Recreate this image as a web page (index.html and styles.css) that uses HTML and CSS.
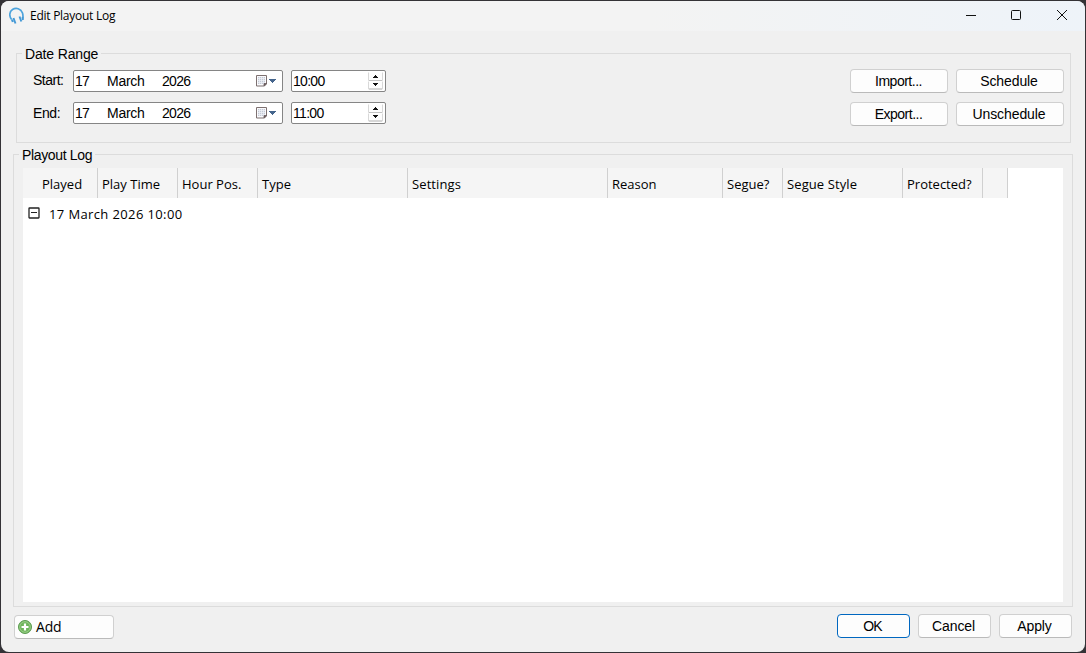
FILE: index.html
```html
<!DOCTYPE html>
<html lang="en">
    <head>
        <meta charset="utf-8">
        <title>Edit Playout Log</title>
        <link rel="stylesheet" href="styles.css">
    </head>
    <body>
        <svg class="defs" width="0" height="0">
            <symbol id="calendar" viewBox="0 0 22 14">
                <path d="M1.500 1.500h10v8.500l-2 2h-8z" fill="#fafafc" stroke="#7d7070"/>
                <path d="M3 3h7v7h-7z" fill="#c3c9d5"/>
                <path d="M3 4.500h7M3 6.500h7M3 8.500h7M4.500 3v7M6.500 3v7M8.500 3v7" stroke="#eef0f5" stroke-width=".8"/>
                <path d="M9 12v-2.500h2.500z" fill="#6b5e60" stroke="#6b5e60" stroke-width=".8"/>
                <path d="M14 5h7v1h-1v1h-1v1h-1v1h-1v-1h-1v-1h-1v-1h-1z" fill="#45658c"/>
            </symbol>
            <symbol id="spin" viewBox="0 0 16 18">
                <path d="M.5 .5v8h14v-8M.5 9.500v7.500h14v-7.500" fill="#fdfdfd" stroke="#d8d8d8"/>
                <path d="M1 8.500h13M1 17h13" stroke="#c2c2c2"/>
                <path d="M7 3h1v1h1v1h1v1h-5v-1h1v-1h1zM5 11h5v1h-1v1h-1v1h-1v-1h-1v-1h-1z" fill="#111"/>
            </symbol>
        </svg>
        <div class="window">
            <div class="titlebar">
                <svg class="logo" width="16" height="18" viewBox="0 0 16 18">
                    <path d="M2.600 12.500C-.3 9 .5 4.500 3.500 2.500c3.500-2.300 8.500-1 10 3.500.6 2 .7 3.500.2 5.500" fill="none" stroke="#4da3dc" stroke-width="1.700"/>
                    <path d="M2.800 12.500l1 2.500M4.500 11l2 5.500M10.500 9.500l1.800 5M13.500 10l.5 3" fill="none" stroke="#4499d6" stroke-width="1.900"/>
                </svg>
                <span class="title">Edit Playout Log</span>
                <svg class="controls" width="104" height="12" viewBox="0 0 104 12" fill="none" stroke="#111">
                    <path d="M0 6.500h10"/>
                    <rect x="45.500" y="1.500" width="9" height="9" rx="1"/>
                    <path d="M91 1l10 10M101 1l-10 10"/>
                </svg>
            </div>

            <div class="group range">
                <span class="legend">Date Range</span>
                <div class="fields">
                    <div class="row">
                        <label class="start">Start:</label>
                        <div class="date">
                            <span class="day">17</span><span class="month">March</span><span>2026</span>
                            <svg width="22" height="14"><use href="#calendar"/></svg>
                        </div>
                        <div class="time"><span>10:00</span><svg width="16" height="18"><use href="#spin"/></svg></div>
                    </div>
                    <div class="row">
                        <label>End:</label>
                        <div class="date">
                            <span class="day">17</span><span class="month">March</span><span>2026</span>
                            <svg width="22" height="14"><use href="#calendar"/></svg>
                        </div>
                        <div class="time"><span>11:00</span><svg width="16" height="18"><use href="#spin"/></svg></div>
                    </div>
                </div>
                <div class="actions">
                    <button class="import">Import...</button>
                    <button class="schedule">Schedule</button>
                    <button class="export">Export...</button>
                    <button class="unschedule">Unschedule</button>
                </div>
            </div>

            <div class="group log">
                <span class="legend">Playout Log</span>
                <div class="list">
                    <div class="header">
                        <span class="played">Played</span>
                        <span>Play Time</span>
                        <span>Hour Pos.</span>
                        <span>Type</span>
                        <span class="settings">Settings</span>
                        <span>Reason</span>
                        <span>Segue?</span>
                        <span class="style">Segue Style</span>
                        <span>Protected?</span>
                        <span></span>
                    </div>
                    <div class="item">
                        <svg width="12" height="12" viewBox="0 0 12 12" fill="none" stroke="#222">
                            <rect x="1" y="1" width="10" height="10" rx=".5" stroke-width="1.300"/>
                            <path d="M3 5.500h6" stroke-width="1.200"/>
                        </svg>
                        <span class="itemText">17 March 2026 10:00</span>
                    </div>
                </div>
            </div>

            <div class="footer">
                <button class="add">
                    <svg width="14" height="14" viewBox="0 0 14 14">
                        <circle cx="7" cy="7" r="6.500" fill="#6fb55c" stroke="#5a9a50"/>
                        <circle cx="7" cy="7" r="5.300" fill="none" stroke="#a5d494" stroke-width=".8"/>
                        <path d="M7 3.500v7M3.500 7h7" stroke="#fff" stroke-width="2.200"/>
                    </svg>
                    <span>Add</span>
                </button>
                <div class="confirm">
                    <button class="ok">OK</button>
                    <button>Cancel</button>
                    <button>Apply</button>
                </div>
            </div>
        </div>
    </body>
</html>
```

FILE: styles.css
```css
* {
    box-sizing: border-box;
}
body {
    margin: 0;
    padding: 1px;
    height: 653px;
    background: #343236;
    color: #000;
    font: 14px/16px "Liberation Sans", sans-serif;
    overflow: hidden;
}
.defs {
    position: absolute;
}
svg {
    display: block;
    flex: none;
}
.window {
    display: flex;
    flex-direction: column;
    height: 651px;
    border-radius: 8px;
    background: #f0f0f0;
    overflow: hidden;
}
.titlebar {
    display: flex;
    align-items: center;
    flex: none;
    height: 30px;
    padding: 0 15px 2px 8px;
    background: linear-gradient(90deg, #f3f3f3 60%, #eef3f9);
}
.logo {
    margin-top: 1px;
}
.title {
    margin-left: 5px;
    font: 12px/16px "Open Sans", "Noto Sans", sans-serif;
    letter-spacing: -.26px;
    padding-top: 2px;
}
.controls {
    margin-left: auto;
}
.group {
    position: relative;
    flex: none;
    border: 1px solid #dcdcdc;
}
.legend {
    position: absolute;
    top: -8px;
    left: 5px;
    padding: 0 3px;
    background: #f0f0f0;
    white-space: nowrap;
    letter-spacing: -.15px;
}
.range {
    display: flex;
    justify-content: space-between;
    height: 90px;
    margin: 22px 14px 0 15px;
    padding: 15px 6px 0 16px;
}
.fields {
    display: flex;
    flex-direction: column;
    gap: 10px;
    padding-top: 1px;
}
.row {
    display: flex;
    height: 22px;
}
label {
    width: 40px;
    padding-top: 3px;
    letter-spacing: -.4px;
}
.start {
    letter-spacing: -.5px;
    padding-top: 2px;
}
.date, .time {
    display: flex;
    align-items: center;
    border: 1px solid #858585;
    border-radius: 2px;
    background: #fff;
}
.date {
    width: 210px;
    padding: 0 5px 0 1px;
}
.date span, .time span {
    letter-spacing: -.7px;
}
.date .day {
    width: 32px;
}
.date .month {
    width: 55px;
    letter-spacing: -.25px;
}
.date svg, .time svg {
    margin-left: auto;
}
.time {
    width: 95px;
    margin-left: 8px;
    padding: 0 1px;
}
.actions {
    display: grid;
    grid-template-columns: 98px 108px;
    grid-auto-rows: 24px;
    gap: 9px 8px;
}
button {
    padding: 0;
    border: 1px solid #d0d0d0;
    border-bottom-color: #bababa;
    border-radius: 4px;
    background: #fdfdfd;
    color: #000;
    font: inherit;
}
.import, .export {
    padding-right: 1px;
    letter-spacing: -.5px;
}
.schedule, .unschedule {
    padding-right: 2px;
    letter-spacing: -.1px;
}
.log {
    height: 453px;
    margin: 11px 12px 0;
    padding: 13px 9px 4px 9px;
}
.log .legend {
    top: -8px;
    letter-spacing: -.35px;
}
.list {
    height: 434px;
    background: #fff;
    font: 13px/18px "Open Sans", "Noto Sans", sans-serif;
}
.header {
    display: grid;
    grid-template-columns: 75px 80px 80px 150px 200px 115px 60px 120px 80px 25px;
    width: 985px;
    height: 30px;
    background: #f5f5f5;
}
.header span {
    padding: 7px 0 0 4px;
    border-right: 1px solid #d0d0d0;
    white-space: nowrap;
}
.header .played {
    padding-left: 19px;
}
.header .settings, .header .style {
    letter-spacing: .1px;
}
.item {
    display: flex;
    padding: 7px 0 0 5px;
}
.item svg {
    margin-top: 2px;
}
.itemText {
    margin-left: 9px;
    letter-spacing: .38px;
}
.footer {
    display: flex;
    justify-content: space-between;
    padding: 7px 13px 0;
}
.add {
    display: flex;
    align-items: center;
    width: 100px;
    height: 24px;
    margin-top: 1px;
    padding-left: 3px;
}
.add span {
    margin-left: 4px;
    font: 14px/18px "Open Sans", "Noto Sans", sans-serif;
    letter-spacing: -.2px;
}
.confirm {
    display: flex;
    gap: 8px;
}
.confirm button {
    width: 73px;
    height: 24px;
    padding: 0 2px 0 0;
    letter-spacing: -.1px;
}
.confirm .ok {
    border-color: #0067c0;
    letter-spacing: -.8px;
}
```
